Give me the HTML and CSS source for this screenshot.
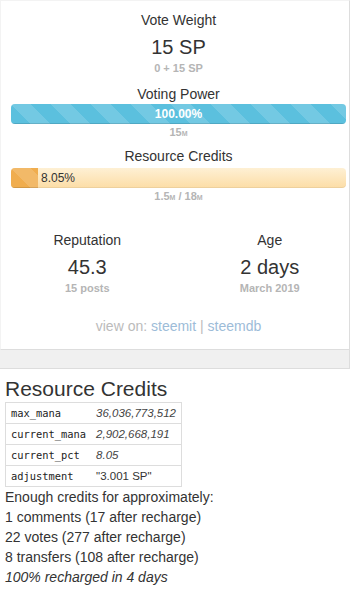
FILE: index.html
```html
<!DOCTYPE html>
<html lang="en">
<head>
    <meta charset="UTF-8">
    <meta name="viewport" content="width=device-width, initial-scale=1.0">
    <title>Account overview</title>
    <link rel="stylesheet" href="styles.css">
</head>
<body>

<!-- Account summary card -->
<div class="card">
    <div class="stat-label first">Vote Weight</div>
    <div class="stat-value">15 SP</div>
    <div class="stat-sub">0 + 15 SP</div>

    <div class="stat-label wide">Voting Power</div>
    <div class="bar bar-vp">
        <div class="bar-fill" style="width: 100%">100.00%</div>
    </div>
    <div class="stat-sub tight">15<small>M</small></div>

    <div class="stat-label">Resource Credits</div>
    <div class="bar bar-rc">
        <div class="bar-fill" style="width: 8.05%"></div>
        <span class="bar-text">8.05%</span>
    </div>
    <div class="stat-sub tight">1.5<small>M</small> / 18<small>M</small></div>

    <div class="stat-row">
        <div class="stat-col">
            <div class="stat-label first">Reputation</div>
            <div class="stat-value">45.3</div>
            <div class="stat-sub">15 posts</div>
        </div>
        <div class="stat-col">
            <div class="stat-label first">Age</div>
            <div class="stat-value">2 days</div>
            <div class="stat-sub">March 2019</div>
        </div>
    </div>

    <div class="view-on">view on: <a href="#">steemit</a> | <a href="#">steemdb</a></div>
</div>
<div class="card-footer"></div>

<!-- Resource credit details -->
<div class="rc-section">
    <h2>Resource Credits</h2>
    <table class="rc-table">
        <tr><td><code>max_mana</code></td><td class="num">36,036,773,512</td></tr>
        <tr><td><code>current_mana</code></td><td class="num">2,902,668,191</td></tr>
        <tr><td><code>current_pct</code></td><td class="num">8.05</td></tr>
        <tr><td><code>adjustment</code></td><td>"3.001 SP"</td></tr>
    </table>
    <div>Enough credits for approximately:</div>
    <div>1 comments (17 after recharge)</div>
    <div>22 votes (277 after recharge)</div>
    <div>8 transfers (108 after recharge)</div>
    <div class="recharge">100% recharged in 4 days</div>
</div>

</body>
</html>
```

FILE: styles.css
```css
body {
    margin: 0;
    font-family: "Liberation Sans", Arial, Helvetica, sans-serif;
    font-size: 14px;
    line-height: 20px;
    color: #333;
    background-color: #fff;
}

.card {
    width: 350px;
    box-sizing: border-box;
    border: 1px solid #f3f3f3;
    border-bottom-color: #dddddd;
    border-right-color: #dddddd;
    padding: 9px 3px 13px 10px;
    text-align: center;
    overflow: hidden;
}

.card-footer {
    width: 350px;
    height: 19px;
    box-sizing: border-box;
    background-color: #f0f0f0;
    border-right: 1px solid #dddddd;
    border-bottom: 1px solid #dddddd;
}

.stat-label {
    margin-top: 6px;
}

.stat-label.first {
    margin-top: 0;
}

.stat-label.wide {
    margin-top: 8px;
}

.stat-label.wide + .bar {
    margin-top: 0;
}

.stat-value {
    margin-top: 6px;
    font-size: 20px;
    line-height: 22px;
}

.stat-sub {
    margin-top: 2px;
    font-size: 11px;
    line-height: 16px;
    font-weight: bold;
    color: #b5b5b5;
}

.stat-sub.tight {
    margin-top: 0;
}

.stat-sub small {
    font-size: 7px;
    line-height: 0;
}

.bar {
    display: flex;
    align-items: center;
    height: 20px;
    margin-top: 2px;
    border-radius: 4px;
    overflow: hidden;
    font-size: 12px;
    line-height: 20px;
}

.bar-fill {
    height: 100%;
    background-size: 40px 40px;
    background-image: linear-gradient(45deg, rgba(255,255,255,.15) 25%, transparent 25%, transparent 50%, rgba(255,255,255,.15) 50%, rgba(255,255,255,.15) 75%, transparent 75%, transparent);
    box-shadow: inset 0 -1px 0 rgba(0,0,0,.12);
}

.bar-vp .bar-fill {
    background-color: #5bc0de;
    color: #fff;
    font-weight: bold;
}

.bar-rc {
    background: linear-gradient(#fef0d4, #fcdda6);
    box-shadow: inset 0 -1px 0 rgba(0,0,0,.06);
}

.bar-rc .bar-fill {
    background-color: #f0ad4e;
}

.bar-text {
    padding-left: 3px;
    color: #333;
}

.stat-row {
    display: grid;
    grid-template-columns: 1fr 1fr;
    margin: 26px -15px 0 -15px;
}

.view-on {
    margin-top: 20px;
    color: #bbbbbb;
}

.view-on a {
    color: #9dbcd8;
    text-decoration: none;
}

.rc-section {
    padding: 0 5px;
}

.rc-section h2 {
    margin: 8px 0 2px 0;
    font-size: 21px;
    line-height: 23px;
    font-weight: normal;
}

.rc-table {
    border-collapse: collapse;
    border: 1px solid #dddddd;
    font-size: 11.5px;
    line-height: 14px;
}

.rc-table tr {
    border-top: 1px solid #dddddd;
}

.rc-table td {
    padding: 3px 5px;
    text-align: left;
}

.rc-table code {
    font-family: "DejaVu Sans Mono", "Liberation Mono", monospace;
    font-size: 10.4px;
    color: #222;
}

.rc-table .num {
    font-style: italic;
    color: #444;
}

.recharge {
    font-style: italic;
}
```
